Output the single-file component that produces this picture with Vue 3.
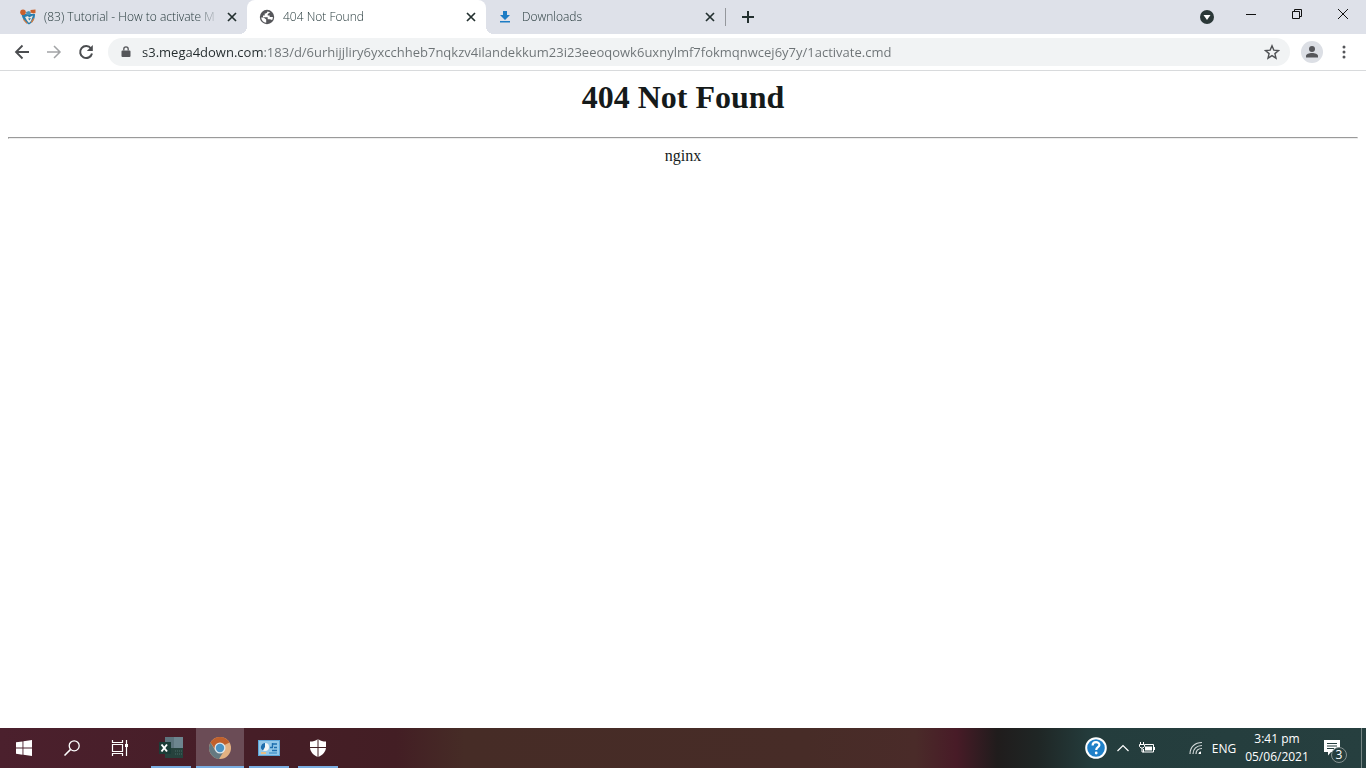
<script setup>
import { ref } from 'vue'

const tabs = [
  { id: 'tutorial', title: '(83) Tutorial - How to activate M', icon: 'shield', active: false },
  { id: 'missing', title: '404 Not Found', icon: 'globe', active: true },
  { id: 'downloads', title: 'Downloads', icon: 'download', active: false },
]
const url = ref('s3.mega4down.com:183/d/6urhijjliry6yxcchheb7nqkzv4ilandekkum23i23eeoqowk6uxnylmf7fokmqnwcej6y7y/1activate.cmd')
</script>

<template>
  <div class="screen">
    <header class="strip">
      <div class="tabs">
        <div v-for="tab in tabs" :key="tab.id" class="tab" :class="{ active: tab.active }">
          <svg v-if="tab.icon === 'shield'" class="favicon" viewBox="0 0 16 16">
            <path d="M1.500 5H15c0 5-2 8-6 10.500C4.500 13 2.500 10 1.500 5z" fill="#287eaf" />
            <path d="M5 8l3-1 1 1.500L13 6.500 12 9l-1 3-2 2-2-2.500z" fill="#efe9e2" />
            <path d="M8 9.500l3-.5-1.500 2.500z" fill="#287eaf" />
            <circle cx="3" cy="3.200" r="2.800" fill="#c9602c" />
            <path d="M6 3l3-1 2 1.500-1 2.500H6.500z" fill="#4b93b8" />
            <path d="M10.500 1l5-.5V4l-2 .5-3-1z" fill="#c9602c" />
            <path d="M3.500 10l4 4-1 .8-3.500-4zM13.500 9l1 .8-2.500 4-1.200-.8z" fill="#d67a3c" />
          </svg>
          <svg v-else-if="tab.icon === 'globe'" class="favicon" viewBox="0 0 16 16">
            <circle cx="8" cy="8" r="7.200" fill="#55565a" />
            <path d="M8.400 2.400C8.200 4 7.200 4.300 5.700 4.500v2H4v1.700h4.700v2h2.200c1.500 0 2 .8 2.100 1 .6-1 .9-2 .9-3.200h-3.200V6.500h-2V5l2.500-1.800z" fill="#fff" />
            <path d="M2.200 8.500h2.500l2.500 2v3.300C4.200 13.400 2.200 11 2.200 8.500z" fill="#fff" />
          </svg>
          <svg v-else class="favicon" viewBox="0 0 16 16">
            <path d="M5 2h4v4h3l-5 5-5-5h3zM2 12h10v1.500H2z" fill="#1d7cc4" />
          </svg>
          <span class="title">{{ tab.title }}</span>
          <button class="close" :aria-label="'Close ' + tab.title">
            <svg viewBox="0 0 10 10" width="10" height="10"><path d="M1 1l8 8M9 1L1 9" stroke="#23302f" stroke-width="1.700" /></svg>
          </button>
        </div>
      </div>
      <span class="divider"></span>
      <button class="add" aria-label="New tab">
        <svg viewBox="0 0 12 12" width="12" height="12"><path d="M6 0v12M0 6h12" stroke="#23302f" stroke-width="2" /></svg>
      </button>
      <button class="search-tabs" aria-label="Search tabs">
        <svg viewBox="0 0 14 14" width="14" height="14"><circle cx="7" cy="7" r="7" fill="#2b3838" /><path d="M3.500 5h7L7 10z" fill="#fff" /></svg>
      </button>
      <div class="window-buttons">
        <button aria-label="Minimise"><svg viewBox="0 0 12 12" width="12" height="12"><path d="M1 6.500h10" stroke="#111" /></svg></button>
        <button aria-label="Restore"><svg viewBox="0 0 12 12" width="12" height="12"><path d="M1.500 3.500h7v7h-7zM3.500 3.500v-2h7v7h-2" fill="none" stroke="#111" /></svg></button>
        <button aria-label="Close window"><svg viewBox="0 0 12 12" width="12" height="12"><path d="M1 1l10 10M11 1L1 11" stroke="#111" /></svg></button>
      </div>
    </header>

    <nav class="toolbar">
      <button aria-label="Back"><svg viewBox="0 0 16 16" width="16" height="16"><path d="M15 8H2M8.500 1.500L2 8l6.500 6.500" fill="none" stroke="#4b4d50" stroke-width="1.800" /></svg></button>
      <button aria-label="Forward"><svg viewBox="0 0 16 16" width="16" height="16"><path d="M1 8h12.500M8 2l6 6-6 6" fill="none" stroke="#a2a4a6" stroke-width="1.500" /></svg></button>
      <button aria-label="Reload"><svg viewBox="0 0 16 16" width="16" height="16"><path d="M13 4.500A6 6 0 1 0 14 9.500" fill="none" stroke="#4b4d50" stroke-width="2" /><path d="M14.800 1v6h-6z" fill="#4b4d50" /></svg></button>
      <div class="omnibox">
        <svg class="lock" viewBox="0 0 10 12" width="10" height="12"><path d="M1.500 4.500h7a1 1 0 0 1 1 1V10a1 1 0 0 1-1 1h-7a1 1 0 0 1-1-1V5.500a1 1 0 0 1 1-1z" fill="#55565a" /><path d="M2.800 4.500V3a2.200 2.200 0 0 1 4.400 0v1.500" fill="none" stroke="#55565a" stroke-width="1.300" /></svg>
        <input v-model="url" class="url" type="text" aria-label="Address" spellcheck="false" />
        <button class="star" aria-label="Bookmark this page"><svg viewBox="0 0 16 16" width="16" height="16"><path d="M8 1.800l1.800 4.300 4.700.4-3.600 3.100 1.100 4.600-4-2.500-4 2.500 1.100-4.600L1.500 6.500l4.700-.4z" fill="none" stroke="#4f5154" stroke-width="1.400" /></svg></button>
      </div>
      <button class="profile" aria-label="Profile"><svg viewBox="0 0 22 22" width="22" height="22"><circle cx="11" cy="11" r="11" fill="#dcdfe5" /><circle cx="11" cy="8" r="3" fill="#55565a" /><path d="M5 16.500v-1.500c0-2 3-3 6-3s6 1 6 3v1.500z" fill="#55565a" /></svg></button>
      <button class="more" aria-label="Menu"><svg viewBox="0 0 4 14" width="4" height="14"><circle cx="2" cy="2" r="1.500" fill="#55565a" /><circle cx="2" cy="7" r="1.500" fill="#55565a" /><circle cx="2" cy="12" r="1.500" fill="#55565a" /></svg></button>
    </nav>

    <main class="page">
      <h1>404 Not Found</h1>
      <hr />
      <p>nginx</p>
    </main>

    <footer class="taskbar">
      <button aria-label="Start"><svg viewBox="0 0 16 16" width="16" height="16"><path d="M0 2.300L6.500 1.400V7.600H0zM7.400 1.200L16 0v7.600H7.400zM0 8.500h6.500v6.200L0 13.800zM7.400 8.500H16V16l-8.600-1.200z" fill="#fff" /></svg></button>
      <button aria-label="Search"><svg viewBox="0 0 16 16" width="16" height="16"><circle cx="10.200" cy="5.800" r="5" fill="none" stroke="#fff" stroke-width="1.300" /><path d="M6.600 9.400L.5 15.500" stroke="#fff" stroke-width="1.500" /></svg></button>
      <button aria-label="Task view"><svg viewBox="0 0 18 16" width="18" height="16"><path d="M1.500 4.500h10v7h-10zM1.500 0v2.500h10V0M1.500 16v-2.500h10V16M15.500 0v16" fill="none" stroke="#fff" stroke-width="1.200" /><path d="M14 4h3v3h-3z" fill="#fff" /></svg></button>
      <div class="apps">
        <button class="app" aria-label="Excel"><svg viewBox="0 0 24 22" width="24" height="22"><path d="M6 0h18v11H6z" fill="#5d747d" /><path d="M15 0h9v11h-9z" fill="#6d858f" /><path d="M6 11h18v10H6z" fill="#26423d" /><path d="M16 14h7M16 17h7" stroke="#486a68" stroke-dasharray="1 1" /><path d="M0 5h12v12H0z" fill="#1c3c37" /><path d="M2.500 7.500l5.500 7M8 7.500l-5.500 7" stroke="#fff" stroke-width="2" /></svg></button>
        <button class="app current" aria-label="Chrome"><svg viewBox="0 0 22 22" width="22" height="22"><circle cx="11" cy="11" r="11" fill="#e3b182" /><path d="M1.500 5.500a11 11 0 0 1 19 0L15.500 8H11l-5 4z" fill="#c0602c" /><path d="M1.500 5.500A11 11 0 0 0 10 22l5-8-9-1z" fill="#657980" /><circle cx="11" cy="11" r="5.500" fill="#dfe7ea" /><circle cx="11" cy="11" r="4.200" fill="#4a93c4" /></svg></button>
        <button class="app" aria-label="Control panel"><svg viewBox="0 0 22 16" width="22" height="16"><path d="M0 0h22v16H0z" fill="#5da5d8" /><path d="M1 1h20v14H1z" fill="#93c8e9" /><circle cx="7" cy="7" r="4" fill="#f2f5f5" /><path d="M7 7V3a4 4 0 0 0-2 7.500z" fill="#1e6ead" /><path d="M14 4h5M12 7.500h3M16 7.500h3M14 10.500h5M14.500 3v4" stroke="#1e6ead" stroke-width="1.400" /><path d="M3 13h5" stroke="#e6bd84" stroke-width="2" /><path d="M11 13h8" stroke="#4e9acd" stroke-width="1.500" /></svg></button>
        <button class="app" aria-label="Security"><svg viewBox="0 0 18 18" width="18" height="18"><path d="M9 0c2.500 2 5 2.500 8 2.500V8c0 4.500-3 8-8 10-5-2-8-5.500-8-10V2.500C4 2.500 6.500 2 9 0z" fill="#fff" /><path d="M9 0v18M1 8.500h16" stroke="#422024" /></svg></button>
      </div>
      <div class="tray">
        <button class="help" aria-label="Help"><svg viewBox="0 0 22 22" width="22" height="22"><circle cx="11" cy="11" r="9.800" fill="#1f80c8" stroke="#fff" stroke-width="2" /><path d="M7.600 8.500c0-4.500 6.800-4.300 6.800-.6 0 2.200-3.200 2.300-3.200 5" fill="none" stroke="#fff" stroke-width="2.200" /><circle cx="11.200" cy="16" r="1.400" fill="#fff" /></svg></button>
        <button class="chevron" aria-label="Show hidden icons"><svg viewBox="0 0 12 8" width="12" height="8"><path d="M.5 7L6 1.500 11.500 7" fill="none" stroke="#fff" stroke-width="1.200" /></svg></button>
        <button class="battery" aria-label="Battery"><svg viewBox="0 0 16 12" width="16" height="12"><path d="M6 2.500h8.500v7.500H4.500V7M15.500 5v3M1.500 0v2M4.500 0v2M.5 2.500h5v2L4 6H2L.5 4.500zM3 6v4h2" fill="none" stroke="#fff" /><path d="M6 4.500h7V8.500H6z" fill="#fff" /></svg></button>
        <button class="wifi" aria-label="Network"><svg viewBox="0 0 14 14" width="14" height="14"><g fill="none" stroke="#d4dada" stroke-width="1.200"><path d="M1 13C1 6 6 1.500 13 1.500M4 13c0-5 3.500-8.500 9-8.500M7 13c0-3 2-5.500 6-5.500" /></g><path d="M9.500 13c0-1.500 1-2.500 2.500-2.500V13z" fill="#fff" /></svg></button>
        <button class="lang">ENG</button>
        <button class="clock"><span>3:41 pm</span><span>05/06/2021</span></button>
        <button class="notices" aria-label="3 notifications">
          <svg viewBox="0 0 16 16" width="16" height="16"><path d="M0 0h16v12H7l-3 3.500V12H0z" fill="#fff" /><path d="M3 3.500h10M3 6h10M3 8.500h7" stroke="#263f3f" /></svg>
          <span class="count">3</span>
        </button>
        <span class="peek"></span>
      </div>
    </footer>
  </div>
</template>

<style>
body { margin: 0; background: #fff; }
</style>

<style scoped>
.screen { display: flex; flex-direction: column; min-height: 100vh; font-family: "Open Sans", "Noto Sans", sans-serif; font-weight: 360; }
button { display: flex; align-items: center; justify-content: center; padding: 0; border: 0; background: none; font: inherit; color: inherit; flex-shrink: 0; }
svg { display: block; flex-shrink: 0; }

.strip { display: flex; height: 34px; background: #dee1e9; padding-left: 8px; }
.tabs { display: flex; min-width: 0; flex: 0 1 717px; }
.tab { display: flex; align-items: center; flex: 1 1 0; min-width: 0; padding: 0 7px 0 12px; box-sizing: border-box; position: relative; font-size: 12px; line-height: 16px; color: #1f3335; }
.tab.active { background: #fff; border-radius: 8px 8px 0 0; }
.tab.active::before, .tab.active::after { content: ""; position: absolute; bottom: 0; width: 8px; height: 8px; }
.tab.active::before { right: 100%; background: radial-gradient(circle at 0 0, transparent 8px, #fff 8px); }
.tab.active::after { left: 100%; background: radial-gradient(circle at 100% 0, transparent 8px, #fff 8px); }
.favicon { width: 16px; height: 16px; margin-right: 8px; }
.title { flex: 1; min-width: 0; overflow: hidden; white-space: nowrap; margin-right: 4px; mask-image: linear-gradient(to right, #000 calc(100% - 24px), transparent); }
.close { width: 16px; height: 16px; }
.divider { width: 1px; height: 18px; margin-top: 8px; background: #94979c; }
.add { width: 43px; }
.search-tabs { width: 28px; margin-left: auto; margin-right: 7px; }
.window-buttons { display: flex; height: 28px; }
.window-buttons button { width: 46px; }

.toolbar { display: flex; align-items: center; height: 36px; border-bottom: 1px solid #d8dadc; padding: 0 10px 0 6px; background: #fff; }
.toolbar > button { width: 32px; height: 32px; }
.omnibox { display: flex; align-items: center; flex: 1; min-width: 0; height: 28px; margin-left: 6px; padding: 0 10px 0 13px; border-radius: 14px; background: #f1f3f4; }
.url { flex: 1; min-width: 0; height: 24px; margin: 0 8px 0 11px; padding: 0; border: 0; outline: 0; font-family: inherit; font-weight: 400; font-size: 13px; color: #6c7275; background: linear-gradient(to right, #232b2d 121px, #6c7275 121px); background-clip: text; -webkit-background-clip: text; -webkit-text-fill-color: transparent; }
.toolbar > .profile { margin-left: 6px; }
.toolbar > .more { width: 24px; margin-left: 4px; }

.page { flex: 1; padding: 8px; font-family: "Liberation Serif", serif; font-weight: 400; color: #151a1a; text-align: center; }
h1 { margin: 0; font-size: 32px; line-height: 37px; font-weight: bold; }
hr { margin: 21px 0 8px; }
p { margin: 0; font-size: 16px; line-height: 18px; }

.taskbar { display: flex; height: 40px; color: #fff; background: linear-gradient(to right, #4b202d 0%, #471e28 15%, #431e24 29%, #462c26 34%, #472c27 59%, #4a2b29 67%, #481b27 70%, #201c1c 73%, #1f2625 76%, #243d3d 80%, #263f3f 100%); }
.taskbar > button { width: 48px; }
.apps { display: flex; gap: 1px; margin-left: 3px; }
.app { width: 48px; position: relative; }
.app::after { content: ""; position: absolute; left: 4px; right: 4px; bottom: 0; height: 2px; background: #7aaee2; }
.app.current { background: #6b4c56; }
.app.current::after { left: 0; right: 0; }
.tray { display: flex; margin-left: auto; font-size: 12px; font-weight: 400; }
.help { width: 32px; }
.chevron { width: 22px; }
.battery { width: 26px; }
.wifi { width: 24px; margin-left: 24px; }
.lang { width: 32px; }
.clock { flex-direction: column; width: 74px; line-height: 18px; }
.notices { width: 36px; position: relative; }
.count { position: absolute; left: 17px; top: 19px; width: 14px; height: 14px; border: 1px solid #879392; border-radius: 50%; background: #263f3f; font-size: 12px; font-weight: 400; line-height: 14px; text-align: center; }
.peek { width: 4px; margin-left: 11px; border-left: 1px solid #768584; }
</style>
